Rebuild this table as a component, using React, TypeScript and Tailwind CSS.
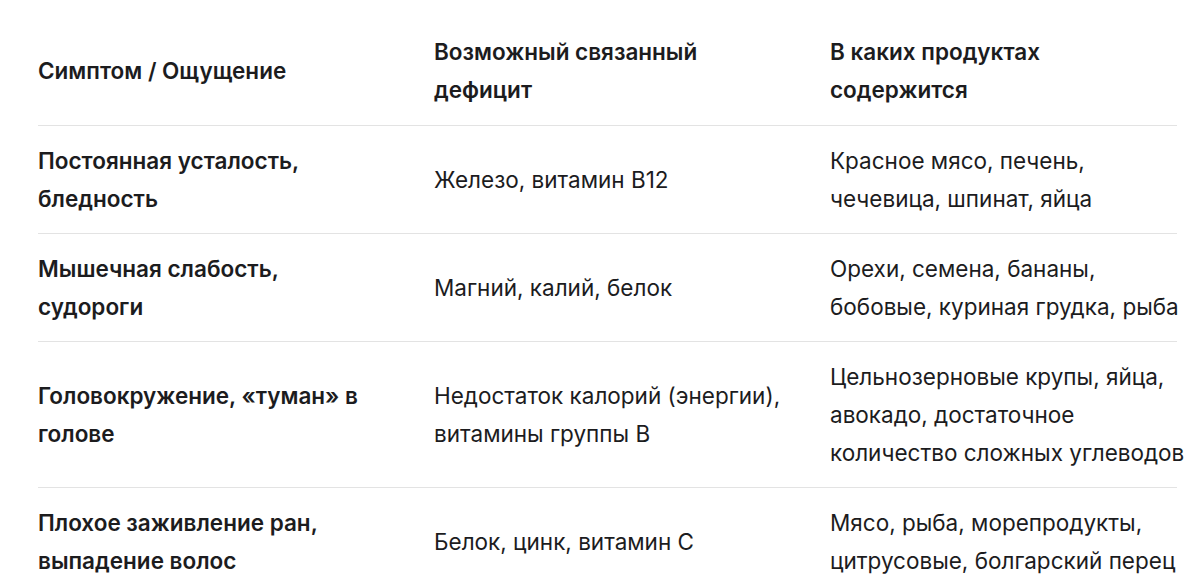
import React from 'react';

type Row = { symptom: string; deficit: string; foods: string };

const ROWS: Row[] = [
  {
    symptom: 'Постоянная усталость, бледность',
    deficit: 'Железо, витамин B12',
    foods: 'Красное мясо, печень, чечевица, шпинат, яйца',
  },
  {
    symptom: 'Мышечная слабость, судороги',
    deficit: 'Магний, калий, белок',
    foods: 'Орехи, семена, бананы, бобовые, куриная грудка, рыба',
  },
  {
    symptom: 'Головокружение, «туман» в голове',
    deficit: 'Недостаток калорий (энергии), витамины группы B',
    foods: 'Цельнозерновые крупы, яйца, авокадо, достаточное количество сложных углеводов',
  },
  {
    symptom: 'Плохое заживление ран, выпадение волос',
    deficit: 'Белок, цинк, витамин C',
    foods: 'Мясо, рыба, морепродукты, цитрусовые, болгарский перец',
  },
];

const first = 'py-[15.5px] pr-[56px] flex items-center';
const mid = 'py-[15.5px] pr-[30px] flex items-center';
const last = 'py-[15.5px] mr-[-8px] flex items-center';

export default function App() {
  return (
    <div
      className="min-h-screen bg-white pl-[38px] pr-[23px] pt-[17px] text-[22.5px] leading-[38px] text-[#1c1c1e]"
      style={{ fontFamily: 'Inter, "Noto Sans", sans-serif' }}
    >
      <div className="grid grid-cols-[396px_396px_1fr] border-b border-[#e3e3e3] font-semibold">
        <div className="py-4 pr-[56px] flex items-center">Симптом / Ощущение</div>
        <div className="py-4 pr-[30px] flex items-center">Возможный связанный дефицит</div>
        <div className="py-4 flex items-center">В каких продуктах содержится</div>
      </div>
      {ROWS.map((r, i) => (
        <div
          key={r.symptom}
          className={`grid grid-cols-[396px_396px_1fr] ${i < ROWS.length - 1 ? 'border-b border-[#e3e3e3]' : ''}`}
        >
          <div className={`${first} font-semibold`}>{r.symptom}</div>
          <div className={mid}>{r.deficit}</div>
          <div className={last}>{r.foods}</div>
        </div>
      ))}
    </div>
  );
}
